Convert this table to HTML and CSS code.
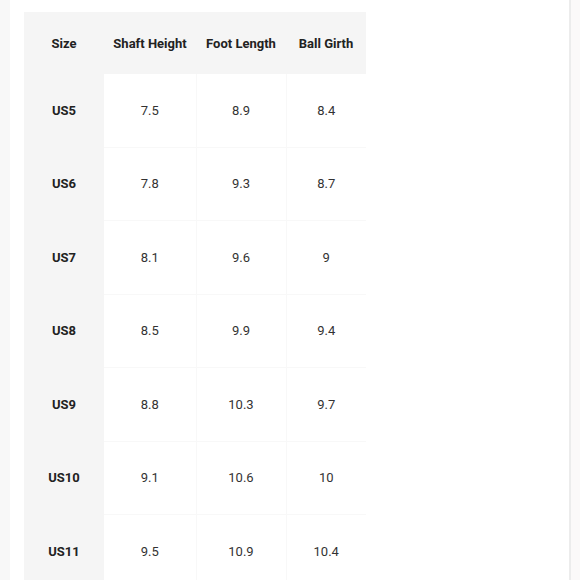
FILE: index.html
```html
<!DOCTYPE html>
<html>
<head>
<meta charset="utf-8">
<link rel="stylesheet" href="styles.css">
</head>
<body>
<div class="page">
  <div class="edge-left"></div>
  <div class="content">
    <table class="sizes">
      <colgroup>
        <col class="c-size"><col class="c-shaft"><col class="c-foot"><col class="c-ball">
      </colgroup>
      <thead>
        <tr><th>Size</th><th>Shaft Height</th><th>Foot Length</th><th>Ball Girth</th></tr>
      </thead>
      <tbody>
        <tr><th>US5</th><td>7.5</td><td>8.9</td><td>8.4</td></tr>
        <tr><th>US6</th><td>7.8</td><td>9.3</td><td>8.7</td></tr>
        <tr><th>US7</th><td>8.1</td><td>9.6</td><td>9</td></tr>
        <tr><th>US8</th><td>8.5</td><td>9.9</td><td>9.4</td></tr>
        <tr><th>US9</th><td>8.8</td><td>10.3</td><td>9.7</td></tr>
        <tr><th>US10</th><td>9.1</td><td>10.6</td><td>10</td></tr>
        <tr><th>US11</th><td>9.5</td><td>10.9</td><td>10.4</td></tr>
      </tbody>
    </table>
  </div>
  <div class="edge-right"></div>
</div>
</body>
</html>
```
FILE: styles.css
```css
html, body {
  margin: 0;
  padding: 0;
  background: #ffffff;
}
body {
  font-family: Roboto, "Liberation Sans", sans-serif;
  width: 580px;
  height: 580px;
  overflow: hidden;
}
.page {
  display: flex;
  height: 580px;
}
.edge-left {
  width: 10px;
  background: #f8f8f8;
}
.content {
  flex: 1;
  padding: 12px 0 0 14px;
  background: #ffffff;
}
.edge-right {
  width: 9px;
  border-left: 2px solid #ececec;
  background: #fbf9f9;
}
.sizes {
  border-collapse: collapse;
  table-layout: fixed;
  width: 342px;
}
.c-size { width: 80px; }
.c-shaft { width: 92px; }
.c-foot { width: 90px; }
.c-ball { width: 80px; }
.sizes thead th {
  background: #f5f5f5;
  height: 62px;
  font-size: 13px;
  font-weight: 700;
  color: #222222;
  text-align: center;
  padding: 0;
}
.sizes tbody th {
  background: #f5f5f5;
  font-size: 13px;
  font-weight: 700;
  color: #222222;
  text-align: center;
  padding: 0;
  height: 72.5px;
}
.sizes td {
  font-size: 13px;
  color: #333333;
  text-align: center;
  padding: 0;
  height: 72.5px;
  border-left: 1px solid #f8f8f8;
  border-top: 1px solid #f8f8f8;
}
.sizes tbody tr:first-child td {
  border-top: none;
}
.sizes td:nth-child(2) {
  border-left: none;
}
```
